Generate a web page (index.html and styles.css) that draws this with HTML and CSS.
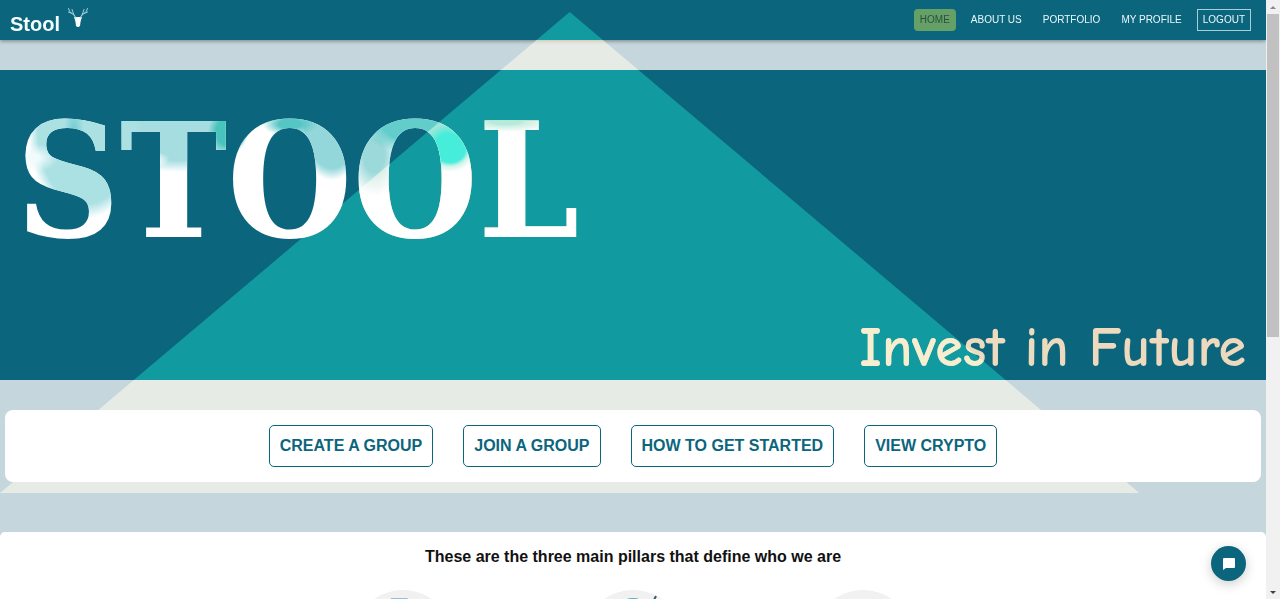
FILE: index.html
```html
<!DOCTYPE html>
<html lang="en">
<head>
<meta charset="utf-8">
<meta name="viewport" content="width=device-width, initial-scale=1">
<title>Stool</title>
<link rel="stylesheet" href="styles.css">
</head>
<body>
<div class="page">
  <header class="navbar">
    <a class="brand" href="#">
      <span>Stool</span>
      <svg class="brand-icon" viewBox="0 0 20 20" aria-hidden="true">
        <path d="M8 9 6 9 7 12 7.5 14 8 18Q10 20 12 18L12.500 14 13 12 14 9 12 9Z" fill="#fff"/>
        <path d="M8 10Q7 7 4 5.500 1 4 .5 .5M4 5.500 .5 4M6.500 8Q5 5 4 1.500M12 10Q13 7 16 5.500 19 4 19.500 .5M16 5.500 19.500 4M13.500 8Q15 5 16 1.500" fill="none" stroke="#a5d2da" stroke-width="1" stroke-linecap="round"/>
      </svg>
    </a>
    <nav class="links" aria-label="Main">
      <a class="link link-active" href="#">HOME</a>
      <a class="link" href="#">ABOUT US</a>
      <a class="link" href="#">PORTFOLIO</a>
      <a class="link" href="#">MY PROFILE</a>
      <button class="link logout" type="button">LOGOUT</button>
    </nav>
  </header>
  <main class="content">
    <section class="hero">
      <h1 class="hero-title">STOOL</h1>
      <p class="tagline">Invest in Future</p>
    </section>
    <section class="actions">
      <button class="action" type="button">CREATE A GROUP</button>
      <button class="action" type="button">JOIN A GROUP</button>
      <button class="action" type="button">HOW TO GET STARTED</button>
      <button class="action" type="button">VIEW CRYPTO</button>
    </section>
    <section class="pillars">
      <h2 class="pillars-title">These are the three main pillars that define who we are</h2>
      <div class="pillar-row">
        <svg class="pillar" viewBox="0 0 100 100" aria-hidden="true"><path d="M38 8H54L60 12V50H38Z" fill="#8fc3d3"/></svg>
        <svg class="pillar" viewBox="0 0 100 100" aria-hidden="true"><circle cx="50" cy="27" r="19" fill="#5ba9bf"/><path d="M70 12 73 6" stroke="#315d70" stroke-width="2"/></svg>
        <svg class="pillar" viewBox="0 0 100 100" aria-hidden="true"><circle cx="50" cy="45" r="20" fill="#8fc3d3"/></svg>
      </div>
    </section>
  </main>
  <div class="triangle"></div>
</div>
<button class="chat" type="button" aria-label="Open chat">
  <svg viewBox="0 0 14 14" width="14" height="14" aria-hidden="true"><path d="M2 1H12Q13 1 13 2V10Q13 11 12 11H4L1 13V2Q1 1 2 1Z" fill="#fff"/></svg>
</button>
<div class="scrollbar" aria-hidden="true">
  <svg viewBox="0 0 14 14" width="14" height="14"><path d="M4 9 7 6 10 9Z" fill="#8a8a8a"/></svg>
  <div class="thumb"></div>
  <svg viewBox="0 0 14 14" width="14" height="14"><path d="M4 6H10L7 9Z" fill="#404040"/></svg>
</div>
</body>
</html>
```
FILE: styles.css
```css
* { box-sizing: border-box; }

html { scrollbar-width: none; }

body {
  margin: 0;
  padding-right: 14px;
  font-family: "Liberation Sans", Arial, sans-serif;
  background: #c5d6dc;
}

.page {
  position: relative;
  isolation: isolate;
  background: #c5d6dc;
}

.navbar {
  position: relative;
  display: flex;
  align-items: center;
  justify-content: space-between;
  height: 40px;
  padding: 0 15px 0 10px;
  background: #0b657d;
  box-shadow: 0 1px 4px rgba(0, 0, 0, 0.4);
}

.brand {
  display: flex;
  align-items: flex-start;
  gap: 8px;
  color: #f4fdff;
  font-size: 20px;
  font-weight: bold;
  line-height: 24px;
  text-decoration: none;
}

.brand span { padding-top: 8px; }

.brand-icon {
  width: 20px;
  height: 20px;
  margin-top: 4px;
}

.links {
  display: flex;
  align-items: center;
  gap: 9px;
}

.link {
  padding: 5px 6px;
  border-radius: 4px;
  color: #eaf9fb;
  font-family: inherit;
  font-size: 10px;
  line-height: 12px;
  text-decoration: none;
}

.link-active {
  background: #65a067;
  color: #2c5044;
}

.logout {
  border: 1px solid #a9d0d8;
  border-radius: 0;
  padding: 4px 5px;
  background: none;
}

.content { padding-top: 30px; }

.hero {
  display: flex;
  flex-direction: column;
  justify-content: space-between;
  min-height: 310px;
  padding: 0 20px 0 16px;
  background: #0b657d;
}

.hero-title {
  align-self: flex-start;
  margin: 0;
  padding-top: 17px;
  font-family: "DejaVu Serif Condensed", "DejaVu Serif", serif;
  font-size: 160px;
  font-weight: bold;
  line-height: 188px;
  color: transparent;
  background:
    radial-gradient(ellipse 20px 22px at 212px 62px, #49c3bd 60%, transparent),
    radial-gradient(ellipse 26px 24px at 434px 78px, #2bdacb 60%, transparent),
    radial-gradient(ellipse 28px 12px at 274px 54px, #55c6c4 40%, transparent),
    radial-gradient(ellipse 10px 26px at 58px 60px, #78ced2 10%, transparent),
    radial-gradient(ellipse 24px 14px at 18px 88px, #f0fbfc 20%, transparent),
    radial-gradient(ellipse 24px 10px at 130px 90px, #fff 40%, transparent),
    radial-gradient(ellipse 60px 90px at 70px 62px, #ace1e4 80%, transparent 96%),
    radial-gradient(ellipse 75px 46px at 160px 56px, #a6dde0 75%, transparent),
    radial-gradient(ellipse 34px 58px at 316px 52px, #94d7da 80%, transparent),
    radial-gradient(ellipse 56px 30px at 400px 54px, #63cdcb 60%, transparent),
    radial-gradient(ellipse 26px 40px at 358px 86px, #9bd9da 40%, transparent),
    radial-gradient(ellipse 50px 10px at 490px 52px, #6fd8d0 30%, transparent),
    #fff;
  background-clip: text;
  -webkit-background-clip: text;
}

.tagline {
  align-self: flex-end;
  margin: 0;
  font-family: "Comic Sans MS", "Comic Neue", "Noto Sans", sans-serif;
  font-size: 56px;
  font-weight: bold;
  line-height: 64px;
  color: transparent;
  background: linear-gradient(90deg, #ecdcc0, #eed9bd);
  background-clip: text;
  -webkit-background-clip: text;
}

.actions {
  position: relative;
  z-index: 1;
  display: flex;
  flex-wrap: wrap;
  justify-content: center;
  gap: 30px;
  margin: 30px 5px 50px;
  padding: 15px;
  border-radius: 8px;
  background: #fff;
}

.action {
  padding: 10px;
  border: 1px solid #0b657d;
  border-radius: 5px;
  background: #fff;
  color: #0b657d;
  font-family: inherit;
  font-size: 16px;
  font-weight: bold;
  line-height: 20px;
}

.pillars {
  padding: 15px 20px 30px;
  border-radius: 5px;
  background: #fff;
}

.pillars-title {
  margin: 0 0 23px;
  color: #111;
  font-size: 16px;
  line-height: 20px;
  text-align: center;
}

.pillar-row {
  display: flex;
  justify-content: center;
  gap: 130px;
}

.pillar {
  width: 100px;
  height: 100px;
  border-radius: 50%;
  background: #f1f1f1;
}

/* Decorative pyramid blended over the top of the page */
.triangle {
  position: absolute;
  top: 12px;
  left: 0;
  width: 90%;
  height: 481px;
  background: #ccc3a4;
  clip-path: polygon(50% 0, 100% 100%, 0 100%);
  mix-blend-mode: overlay;
  pointer-events: none;
}

.chat {
  position: fixed;
  right: 34px;
  bottom: 18px;
  display: grid;
  place-items: center;
  width: 35px;
  height: 35px;
  padding: 0;
  border: 0;
  border-radius: 50%;
  background: #0b657d;
  box-shadow: 0 3px 12px rgba(0, 0, 0, 0.2);
}

.scrollbar {
  position: fixed;
  top: 0;
  right: 0;
  bottom: 0;
  display: flex;
  flex-direction: column;
  width: 14px;
  background: #f1f1f1;
}

.thumb {
  height: 54%;
  margin: 0 1px auto;
  background: #c1c1c1;
}
```
